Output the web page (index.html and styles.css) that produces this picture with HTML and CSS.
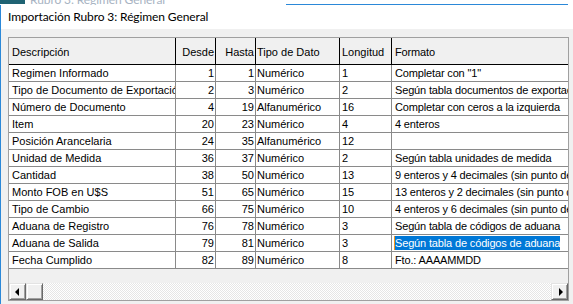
FILE: index.html
```html
<!DOCTYPE html>
<html lang="es">
<head>
<meta charset="utf-8">
<title>Importación Rubro 3: Régimen General</title>
<link rel="stylesheet" href="styles.css">
</head>
<body>
<div class="screen">
  <div class="behind">
    <div class="behind-tab"></div>
    <div class="behind-title"><span>Rubro 3: Régimen General</span></div>
    <div class="behind-line"></div>
  </div>
  <div class="dialog">
    <div class="titlebar">Importación Rubro 3: Régimen General</div>
    <div class="client">
      <div class="grid">
        <div class="row head">
          <div class="c c1">Descripción</div>
          <div class="c c2">Desde</div>
          <div class="c c3">Hasta</div>
          <div class="c c4">Tipo de Dato</div>
          <div class="c c5">Longitud</div>
          <div class="c c6">Formato</div>
        </div>
        <div class="row"><div class="c c1">Regimen Informado</div><div class="c c2">1</div><div class="c c3">1</div><div class="c c4">Numérico</div><div class="c c5">1</div><div class="c c6">Completar con "1"</div></div>
        <div class="row"><div class="c c1">Tipo de Documento de Exportación</div><div class="c c2">2</div><div class="c c3">3</div><div class="c c4">Numérico</div><div class="c c5">2</div><div class="c c6">Según tabla documentos de exportación</div></div>
        <div class="row"><div class="c c1">Número de Documento</div><div class="c c2">4</div><div class="c c3">19</div><div class="c c4">Alfanumérico</div><div class="c c5">16</div><div class="c c6">Completar con ceros a la izquierda</div></div>
        <div class="row"><div class="c c1">Item</div><div class="c c2">20</div><div class="c c3">23</div><div class="c c4">Numérico</div><div class="c c5">4</div><div class="c c6">4 enteros</div></div>
        <div class="row"><div class="c c1">Posición Arancelaria</div><div class="c c2">24</div><div class="c c3">35</div><div class="c c4">Alfanumérico</div><div class="c c5">12</div><div class="c c6"></div></div>
        <div class="row"><div class="c c1">Unidad de Medida</div><div class="c c2">36</div><div class="c c3">37</div><div class="c c4">Numérico</div><div class="c c5">2</div><div class="c c6">Según tabla unidades de medida</div></div>
        <div class="row"><div class="c c1">Cantidad</div><div class="c c2">38</div><div class="c c3">50</div><div class="c c4">Numérico</div><div class="c c5">13</div><div class="c c6">9 enteros y 4 decimales (sin punto decimal)</div></div>
        <div class="row"><div class="c c1">Monto FOB en U$S</div><div class="c c2">51</div><div class="c c3">65</div><div class="c c4">Numérico</div><div class="c c5">15</div><div class="c c6">13 enteros y 2 decimales (sin punto decimal)</div></div>
        <div class="row"><div class="c c1">Tipo de Cambio</div><div class="c c2">66</div><div class="c c3">75</div><div class="c c4">Numérico</div><div class="c c5">10</div><div class="c c6">4 enteros y 6 decimales (sin punto decimal)</div></div>
        <div class="row"><div class="c c1">Aduana de Registro</div><div class="c c2">76</div><div class="c c3">78</div><div class="c c4">Numérico</div><div class="c c5">3</div><div class="c c6">Según tabla de códigos de aduana</div></div>
        <div class="row"><div class="c c1">Aduana de Salida</div><div class="c c2">79</div><div class="c c3">81</div><div class="c c4">Numérico</div><div class="c c5">3</div><div class="c c6"><span class="sel">Según tabla de códigos de aduana</span></div></div>
        <div class="row"><div class="c c1">Fecha Cumplido</div><div class="c c2">82</div><div class="c c3">89</div><div class="c c4">Numérico</div><div class="c c5">8</div><div class="c c6">Fto.: AAAAMMDD</div></div>
        <div class="empty"></div>
        <div class="hscroll">
          <div class="sbtn"><span class="arrow-left"></span></div>
          <div class="sbtn"></div>
          <div class="track"></div>
          <div class="sbtn"><span class="arrow-right"></span></div>
        </div>
      </div>
    </div>
  </div>
</div>
</body>
</html>
```
FILE: styles.css
```css
html, body {
  margin: 0;
  padding: 0;
  background: #ffffff;
}
.screen {
  width: 573px;
  height: 304px;
  overflow: hidden;
  display: flex;
  flex-direction: column;
}
.behind {
  display: flex;
  height: 5px;
  flex: none;
  overflow: hidden;
  background: #ffffff;
}
.behind-tab {
  width: 25px;
  height: 4px;
  background: #1f6373;
  flex: none;
}
.behind-title {
  width: 261px;
  flex: none;
  overflow: hidden;
  padding-left: 5px;
  box-sizing: border-box;
}
.behind-title span {
  display: block;
  font-family: Lato, "Noto Sans", sans-serif;
  font-size: 12px;
  letter-spacing: -0.1px;
  line-height: 12px;
  margin-top: -6px;
  color: #a7b3c2;
  white-space: nowrap;
}
.behind-line {
  width: 282px;
  height: 5px;
  box-sizing: border-box;
  border-bottom: 1px solid #2b88d8;
  flex: none;
}
.dialog {
  flex: 1;
  display: flex;
  flex-direction: column;
  border-left: 1px solid #2b88d8;
}
.titlebar {
  height: 24px;
  flex: none;
  background: #ffffff;
  padding-left: 7px;
  font-family: Lato, "Noto Sans", sans-serif;
  font-size: 12px;
  letter-spacing: -0.1px;
  line-height: 24px;
  color: #000000;
  white-space: nowrap;
}
.client {
  flex: 1;
  background: #f0f0f0;
  padding: 8px 0 0 7px;
}
.grid {
  width: 561px;
  height: 264px;
  box-sizing: border-box;
  border: 1px solid #a0a0a0;
  overflow: hidden;
  display: flex;
  flex-direction: column;
  background: #f0f0f0;
  font-family: "Liberation Sans", Arial, sans-serif;
  font-size: 11px;
  color: #000000;
}
.row {
  display: grid;
  grid-template-columns: 167px 40px 40px 84px 52px 220px;
  height: 17px;
  flex: none;
  width: 603px;
}
.c {
  box-sizing: border-box;
  border-right: 1px solid #8a8a8a;
  border-bottom: 1px solid #8a8a8a;
  background: #ffffff;
  line-height: 16px;
  white-space: nowrap;
  overflow: hidden;
}
.c1 { padding-left: 3px; }
.c2, .c3 { text-align: right; padding-right: 1px; }
.c4 { padding-left: 1px; }
.c5 { padding-left: 2px; }
.c6 { padding-left: 3px; letter-spacing: -0.15px; }
.row.head {
  height: 27px;
}
.head .c {
  background: #f0f0f0;
  border-right-color: #000000;
  border-bottom-color: #000000;
  padding-top: 2px;
  line-height: 24px;
}
.sel {
  display: inline-block;
  margin-left: -1px;
  height: 14px;
  line-height: 14px;
  vertical-align: top;
  margin-top: 1px;
  background: #0078d7;
  color: #ffffff;
  border-left: 1px solid #f7941d;
}
.empty {
  height: 14px;
  flex: none;
}
.hscroll {
  display: flex;
  height: 17px;
  flex: none;
}
.sbtn {
  width: 17px;
  height: 17px;
  box-sizing: border-box;
  flex: none;
  background: #f0f0f0;
  border-top: 1px solid #e3e3e3;
  border-left: 1px solid #e3e3e3;
  border-right: 1px solid #696969;
  border-bottom: 1px solid #696969;
  box-shadow: inset 1px 1px #ffffff, inset -1px -1px #a0a0a0;
  display: flex;
  align-items: center;
  justify-content: center;
}
.track {
  flex: 1;
  background: repeating-conic-gradient(#ffffff 0 25%, #e6e6e6 0 50%) 0 0 / 2px 2px;
}
.arrow-left {
  width: 0;
  height: 0;
  border-top: 4px solid transparent;
  border-bottom: 4px solid transparent;
  border-right: 4px solid #000000;
  margin-left: -2px;
}
.arrow-right {
  width: 0;
  height: 0;
  border-top: 4px solid transparent;
  border-bottom: 4px solid transparent;
  border-left: 4px solid #000000;
  margin-left: 2px;
}
```
